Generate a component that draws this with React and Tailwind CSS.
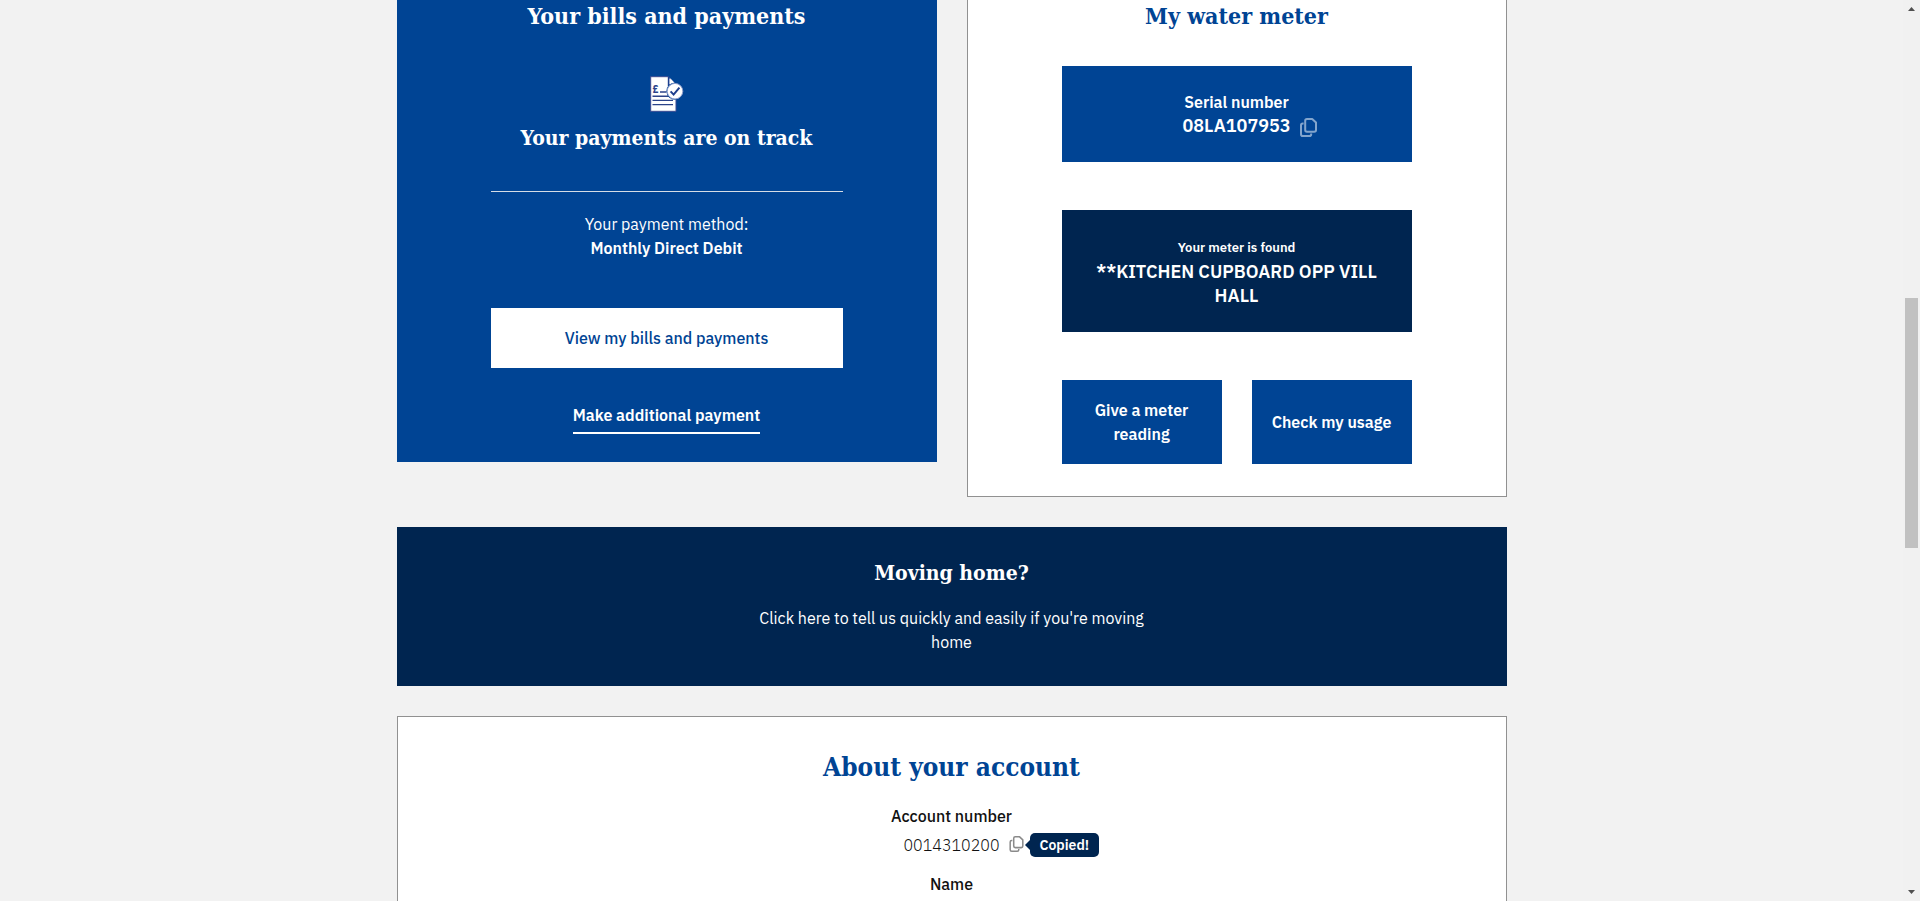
const slab =
  "font-['Roboto_Slab','DejaVu_Serif_Condensed','DejaVu_Serif',serif] font-bold";

function BillIcon() {
  return (
    <svg className="mx-auto mt-11 block h-9 w-[34px]" viewBox="0 0 34 36" aria-hidden="true">
      <path d="M.7 .7H18.2L26 8.5V35.3H.7Z" fill="#fff" stroke="#3a4a92" strokeWidth="1" />
      <path d="M18.6 .7V9.4H25" fill="none" stroke="#1d3f8f" strokeWidth="1.6" />
      <path d="M20.2 2.2L25.2 7.6H20.2Z" fill="#fff" />
      <text x="2.6" y="16.6" fill="#2b4389" className="text-[10px] font-bold">
        £
      </text>
      <path d="M10 16H16.4M2.5 20.3H19M2.5 24.4H23M2.5 28.6H23" stroke="#2b4389" strokeWidth="1.4" />
      <circle cx="25" cy="15.2" r="8.6" fill="#004494" />
      <circle cx="25" cy="15.2" r="7.8" fill="#fff" stroke="#8d9dcb" strokeWidth="1" />
      <path d="M20.6 15.4L23.6 18.6L29.4 11.6" fill="none" stroke="#1f3f8d" strokeWidth="2" />
    </svg>
  );
}

function CopyIcon({ className, weight = 1.8 }) {
  return (
    <svg className={className} viewBox="0 0 17 19" fill="none" stroke="currentColor" aria-hidden="true">
      <path
        d="M7 1H12.2L16 4.6V12Q16 13.8 14.2 13.8H7Q5.2 13.8 5.2 12V2.8Q5.2 1 7 1Z"
        strokeWidth={weight}
        strokeLinejoin="round"
      />
      <path
        d="M3.6 5.4H2.8Q1 5.4 1 7.2V16.2Q1 18 2.8 18H9.4Q11.2 18 11.2 16.2V15.4"
        strokeWidth={weight}
      />
    </svg>
  );
}

function BillsCard() {
  return (
    <section className="bg-[#004494] px-[94px] pb-7 text-center text-white">
      <h2 className={`${slab} -mx-20 text-[23px] leading-8`}>Your bills and payments</h2>
      <BillIcon />
      <h3 className={`${slab} -mx-20 mt-2.5 text-[21px] leading-8`}>Your payments are on track</h3>
      <hr className="mt-[37px] border-t border-[#d5dde6]" />
      <p className="mt-5">Your payment method:</p>
      <p className="font-semibold">Monthly Direct Debit</p>
      <a
        href="#bills"
        className="mt-12 flex h-[60px] items-center justify-center bg-white font-medium text-[#004494]"
      >
        View my bills and payments
      </a>
      <a href="#pay" className="mt-[35px] inline-block border-b-2 border-white pb-[5px] align-top font-semibold">
        Make additional payment
      </a>
    </section>
  );
}

function MeterCard() {
  return (
    <section className="border border-t-0 border-[#919191] bg-white px-[94px] pb-8 text-center font-semibold text-white">
      <h2 className={`${slab} text-[23px] leading-8 text-[#004494]`}>My water meter</h2>
      <div className="mt-[34px] bg-[#004494] py-6">
        <p>Serial number</p>
        <div className="grid grid-cols-[1fr_auto_1fr] items-center">
          <span className="col-start-2 text-lg leading-6">08LA107953</span>
          <button type="button" aria-label="Copy serial number" className="ml-[9px] justify-self-start text-[#83a5cd]">
            <CopyIcon className="mt-0.5 h-[19px] w-[17px]" weight={2} />
          </button>
        </div>
      </div>
      <div className="mt-12 bg-[#002550] px-6 pt-[26px] pb-6">
        <p className="text-[13px] leading-6">Your meter is found</p>
        <p className="text-lg leading-6">**KITCHEN CUPBOARD OPP VILL HALL</p>
      </div>
      <div className="mt-12 grid grid-cols-2 gap-[30px]">
        <a href="#reading" className="flex items-center justify-center bg-[#004494] px-4 py-[18px]">
          Give a meter reading
        </a>
        <a href="#usage" className="flex items-center justify-center bg-[#004494] px-4 py-[18px]">
          Check my usage
        </a>
      </div>
    </section>
  );
}

function AccountCard() {
  return (
    <section className="mt-[30px] shrink-0 border border-[#919191] bg-white pt-8 pb-24 text-center text-[#111]">
      <h2 className={`${slab} text-[26px] leading-9 text-[#004494]`}>About your account</h2>
      <h3 className="mt-[19px] font-medium">Account number</h3>
      <div className="mt-[5px] grid grid-cols-[1fr_auto_1fr] items-center">
        <span className="col-start-2 font-light">0014310200</span>
        <div className="flex items-center">
          <button type="button" aria-label="Copy account number" className="mb-0.5 ml-[9px] text-[#8a8a8a]">
            <CopyIcon className="h-4 w-[15px]" />
          </button>
          <span role="status" className="flex items-center pl-px">
            <svg className="h-2.5 w-[5px]" viewBox="0 0 5 10" aria-hidden="true">
              <path d="M5 0V10L0 5Z" fill="#002550" />
            </svg>
            <span className="rounded-[5px] bg-[#002550] px-2.5 text-sm leading-6 font-semibold text-white">
              Copied!
            </span>
          </span>
        </div>
      </div>
      <h3 className="mt-[15px] font-medium">Name</h3>
    </section>
  );
}

function Scrollbar() {
  return (
    <div className="flex w-[17px] shrink-0 flex-col items-center bg-[#f1f1f1] py-[7px]" aria-hidden="true">
      <svg className="h-1 w-[7px] shrink-0" viewBox="0 0 7 4">
        <path d="M0 4H7L3.5 0Z" fill="#505050" />
      </svg>
      <div className="grow-[287]" />
      <div className="w-[13px] grow-[250] bg-[#c1c1c1]" />
      <div className="grow-[342]" />
      <svg className="h-1 w-[7px] shrink-0" viewBox="0 0 7 4">
        <path d="M0 0H7L3.5 4Z" fill="#505050" />
      </svg>
    </div>
  );
}

export default function App() {
  return (
    <div className="flex h-screen overflow-hidden bg-[#f2f2f2] font-['IBM_Plex_Sans','Noto_Sans',sans-serif] text-base leading-6">
      <main className="flex-1 overflow-hidden">
        <div className="mx-auto flex max-w-[1140px] flex-col px-[15px]">
          <div className="grid grid-cols-2 items-start gap-[30px]">
            <BillsCard />
            <MeterCard />
          </div>
          <a href="#moving" className="mt-[30px] block bg-[#002550] pt-[30px] pb-8 text-center text-white">
            <h2 className={`${slab} text-[21px] leading-8`}>Moving home?</h2>
            <p className="mx-auto mt-[17px] max-w-[400px]">
              Click here to tell us quickly and easily if you're moving home
            </p>
          </a>
          <AccountCard />
        </div>
      </main>
      <Scrollbar />
    </div>
  );
}
